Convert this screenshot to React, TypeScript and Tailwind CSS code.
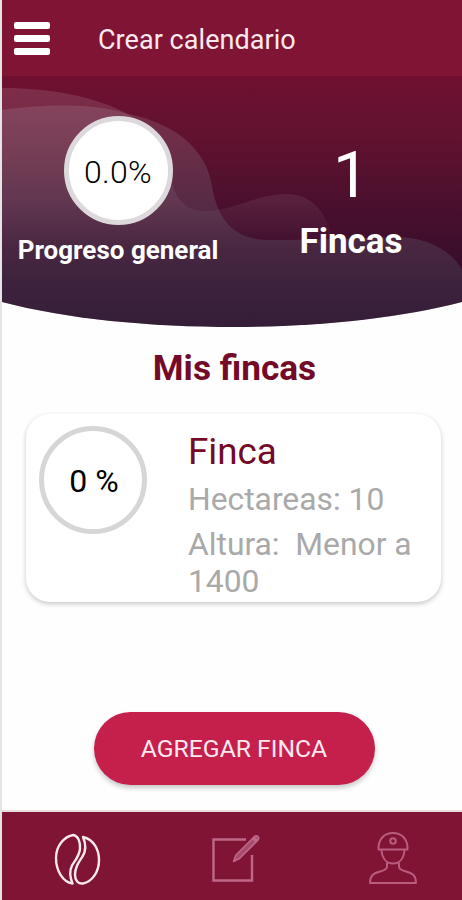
import type { ReactNode } from 'react'

type Tab = {
  id: string
  label: string
  icon: ReactNode
}

const FINCAS = [{ name: 'Finca', progress: '0 %', hectareas: 10, altura: 'Menor a 1400' }]

const TABS: Tab[] = [
  { id: 'fincas', label: 'Fincas', icon: <BeanIcon /> },
  { id: 'registro', label: 'Registro', icon: <EditIcon /> },
  { id: 'perfil', label: 'Perfil', icon: <WorkerIcon /> },
]

function BeanIcon() {
  return (
    <svg width="48" height="54" viewBox="0 -1 48 54" fill="none" stroke="#fbe9ee" strokeWidth="2.4" strokeLinejoin="round">
      <path d="M20.500 2C11 3.500 3 13 3 25c0 13 7 24 16.500 25.500-2.500-6-3.500-12-.5-18C22 27 26 24 27 16c.6-6-1.500-13-6.500-14Z" />
      <path d="M30 4c3 7 3 14-.5 19.500-4 6-7.500 11-7.500 18 0 6 3 9.500 8 9C39 49 46 39 46 27 46 17 41 6.500 30 4Z" />
    </svg>
  )
}

function EditIcon() {
  return (
    <svg width="52" height="52" viewBox="0 -1 52 52" fill="none" stroke="#bf6888" strokeWidth="2.4">
      <path d="M37 6.500H4.500v41H43V22" />
      <path d="M24.500 28.500l2.500-6.500L45.500 3.500c2.500-2 5.500 1 3.500 3.500L30.500 25.500Z" fill="#a84a6c" strokeWidth="1.600" strokeLinejoin="round" />
      <path d="M45.500 3.500l3.500 3.500-2.500 2.500-3.500-3.500Z" fill="#bf6888" stroke="none" />
    </svg>
  )
}

function WorkerIcon() {
  return (
    <svg width="48" height="54" viewBox="0 0 48 54" fill="none" stroke="#b95c7e" strokeWidth="2" strokeLinejoin="round">
      <path d="M9.500 17.500C9 7.500 15 1 24 1s15 6.500 14.500 16.500Z" />
      <circle cx="24" cy="9" r="2.800" />
      <path d="M12.500 17.500C13 26 17 31.500 24 31.500S35 26 35.500 17.500" />
      <path d="M18 30.500v4c0 2.500-3 4-7 5-6.500 1.500-10 4-10 11.500h46c0-7.500-3.500-10-10-11.500-4-1-7-2.500-7-5v-4" />
    </svg>
  )
}

function HeroBackground() {
  return (
    <svg width="460" height="252" viewBox="2 76 460 252" className="block [grid-area:1/1]">
      <defs>
        <linearGradient id="heroBg" x1="0" y1="76" x2="0" y2="328" gradientUnits="userSpaceOnUse">
          <stop offset="0" stopColor="#701031" />
          <stop offset="0.250" stopColor="#60122f" />
          <stop offset="0.550" stopColor="#470f2d" />
          <stop offset="0.800" stopColor="#340d2b" />
          <stop offset="1" stopColor="#2b0b29" />
        </linearGradient>
        <linearGradient id="waveBack" x1="0" y1="88" x2="0" y2="250" gradientUnits="userSpaceOnUse">
          <stop offset="0" stopColor="#fff" stopOpacity="0.120" />
          <stop offset="0.700" stopColor="#fff" stopOpacity="0.070" />
          <stop offset="1" stopColor="#fff" stopOpacity="0" />
        </linearGradient>
        <linearGradient id="waveFront" x1="0" y1="100" x2="0" y2="328" gradientUnits="userSpaceOnUse">
          <stop offset="0" stopColor="#b6a0b0" stopOpacity="0.200" />
          <stop offset="0.600" stopColor="#6e7080" stopOpacity="0.260" />
          <stop offset="1" stopColor="#4c5060" stopOpacity="0.260" />
        </linearGradient>
        <clipPath id="heroClip">
          <path d="M2 76H462V302C400 318 320 327 235 327S66 319 2 302Z" />
        </clipPath>
      </defs>
      <g clipPath="url(#heroClip)">
        <rect x="2" y="76" width="460" height="252" fill="url(#heroBg)" />
        <path
          d="M2 88C52 88 96 97 128 114C156 129 166 160 173 186C178 204 190 211 205 211C236 211 254 194 288 194C312 195 325 212 331 233C334 242 338 247 344 250H2Z"
          fill="url(#waveBack)"
        />
        <path
          d="M2 110C40 105 90 102 128 114C174 123 204 148 211 181C216 212 227 240 270 240C320 240 352 238 395 237C428 237 452 251 462 270V328H2Z"
          fill="url(#waveFront)"
        />
      </g>
    </svg>
  )
}

export default function App() {
  return (
    <div className="flex h-[900px] w-[462px] flex-col overflow-hidden border-l-2 border-[#e6e4e4] bg-[#fefefe] font-['Roboto',sans-serif]">
      <header className="flex h-[76px] shrink-0 items-center bg-[#801435] pl-3 text-white">
        <button aria-label="Menú" className="flex w-9 flex-col gap-1.5">
          <span className="h-[7px] rounded-xs bg-white" />
          <span className="h-[7px] rounded-xs bg-white" />
          <span className="h-[7px] rounded-xs bg-white" />
        </button>
        <h1 className="ml-12 pt-1 text-[27px] tracking-[0.05px] text-[#fbe9ee]">Crear calendario</h1>
      </header>

      <section className="grid h-[252px] shrink-0">
        <HeroBackground />
        <div className="z-10 flex text-white [grid-area:1/1]">
          <div className="flex w-[232px] flex-col items-center pt-10">
            <div className="flex size-[109px] items-center justify-center rounded-full border-[5px] border-[#dcd8dc] bg-white pt-0.5 text-[32px] font-light tracking-[0.3px] text-black">
              0.0%
            </div>
            <p className="mt-1.5 text-[26px] font-bold">Progreso general</p>
          </div>
          <div className="flex w-[234px] flex-col items-center pt-[62px]">
            <p className="text-[64px] leading-[75px]">1</p>
            <p className="mt-2 text-[35px] leading-[42px] font-bold">Fincas</p>
          </div>
        </div>
      </section>

      <main className="flex flex-1 flex-col items-center">
        <h2 className="mt-[19px] ml-[5px] text-[35.2px] leading-[42px] font-bold text-[#720a28]">Mis fincas</h2>

        {FINCAS.map((finca) => (
          <article
            key={finca.name}
            className="mt-[25px] ml-[3px] flex h-[188px] w-[415px] rounded-[24px] bg-white shadow-[0_2px_5px_rgba(0,0,0,0.22)]"
          >
            <div className="mt-3 ml-[13px] flex size-[108px] shrink-0 items-center justify-center rounded-full border-[5px] border-[#d6d6d6] pt-0.5 pl-0.5 text-[32px] text-black">
              {finca.progress}
            </div>
            <div className="ml-[41px] w-[235px] pt-[17px] text-[31.8px] leading-[37px] text-[#a9a9a9]">
              <h3 className="text-[36.8px] leading-[42px] text-[#720a28]">{finca.name}</h3>
              <p className="mt-2">Hectareas: {finca.hectareas}</p>
              <p className="mt-2 whitespace-pre-wrap">{`Altura:  ${finca.altura}`}</p>
            </div>
          </article>
        ))}

        <button className="mt-[110px] ml-[4px] h-[73px] w-[281px] rounded-full bg-[#c5204c] text-[24.7px] text-[#fdeaf0] shadow-[0_3px_5px_rgba(0,0,0,0.22)]">
          AGREGAR FINCA
        </button>
      </main>

      <nav className="flex h-[90px] shrink-0 justify-between border-t-2 border-[#eadedd] bg-[#801435] pt-[20px] pr-[45px] pl-[51px]">
        {TABS.map((tab) => (
          <button key={tab.id} aria-label={tab.label} className="flex items-start">
            {tab.icon}
          </button>
        ))}
      </nav>
    </div>
  )
}
